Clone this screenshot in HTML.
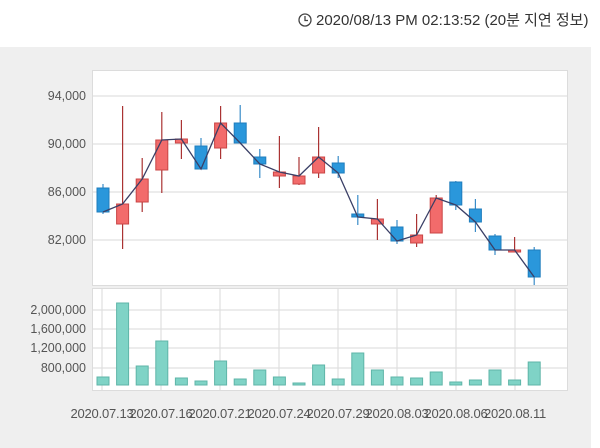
<!DOCTYPE html>
<html><head><meta charset="utf-8"><style>
body{margin:0;width:600px;height:448px;background:#fff;overflow:hidden;font-family:"Liberation Sans","Noto Sans CJK KR",sans-serif}
</style></head><body>
<svg id="s" width="600" height="448" xmlns="http://www.w3.org/2000/svg" style="position:absolute;left:0;top:0">
<rect x="0" y="47" width="591" height="401" fill="#efefef"/>
<rect x="92.5" y="70.5" width="475" height="215" fill="#fff" stroke="#dcdcdc"/>
<rect x="92.5" y="288.5" width="475" height="102" fill="#fff" stroke="#dcdcdc"/>
<g stroke="#e0e0e0" stroke-width="1.2">
<line x1="93" x2="567" y1="96" y2="96"/><line x1="93" x2="567" y1="144" y2="144"/>
<line x1="93" x2="567" y1="192" y2="192"/><line x1="93" x2="567" y1="240" y2="240"/>
<line x1="93" x2="567" y1="310" y2="310"/><line x1="93" x2="567" y1="329" y2="329"/>
<line x1="93" x2="567" y1="348" y2="348"/><line x1="93" x2="567" y1="368" y2="368"/>
</g>
<g id="vl" stroke="#e0e0e0" stroke-width="1.2"></g>
<g id="c"></g>
<g font-size="12.5" fill="#555" text-anchor="end">
<text x="86" y="100">94,000</text><text x="86" y="148">90,000</text>
<text x="86" y="196">86,000</text><text x="86" y="244">82,000</text>
<text x="86" y="314">2,000,000</text><text x="86" y="333">1,600,000</text>
<text x="86" y="352">1,200,000</text><text x="86" y="372">800,000</text>
</g>
<g font-size="13" fill="#555" text-anchor="middle" letter-spacing="-0.2">
<text x="102" y="418">2020.07.13</text><text x="161" y="418">2020.07.16</text>
<text x="220" y="418">2020.07.21</text><text x="279" y="418">2020.07.24</text>
<text x="338" y="418">2020.07.29</text><text x="397" y="418">2020.08.03</text>
<text x="456" y="418">2020.08.06</text><text x="515" y="418">2020.08.11</text>
</g>
<circle cx="305" cy="20" r="6" fill="none" stroke="#444" stroke-width="1.3"/>
<path d="M305 16v4.5h3" fill="none" stroke="#444" stroke-width="1.3"/>
<text x="316" y="25" font-size="15" fill="#333">2020/08/13 PM 02:13:52 (20분 지연 정보)</text>
</svg>
<script>
var d=[[188,212,184,214,0],[204,224,106,249,1],[179,202,158,212,1],[140,170,112,193,1],[139,143,120,159,1],[146,169,138,169,0],[123,148,106,159,1],[123,143,105,143,0],[157,164,149,178,0],[172,176,136,188,1],[176,184,157,185,1],[157,173,127,178,1],[163,173,156,178,0],[214,217,195,225,0],[219,224,199,240,1],[227,241,220,244,0],[235,243,214,247,1],[198,233,195,233,1],[182,205,181,210,0],[209,222,199,232,0],[236,250,234,255,0],[250,251,237,251,1],[250,277,247,285,0]];
var v=[377,303,366,341,378,381,361,379,370,377,383,365,379,353,370,377,378,372,382,380,370,380,362];
var h='',pts=[];
for(var i=0;i<23;i++){var x=103+i*19.6,c=d[i],up=c[4];
var col=up?'#f26b6b':'#2a97db',sk=up?'#c94444':'#1f7dbd',wk=up?'#a33':'#3a8cc8';
h+='<line x1="'+x+'" x2="'+x+'" y1="'+c[2]+'" y2="'+c[3]+'" stroke="'+wk+'" stroke-width="1.2"/>';
h+='<rect x="'+(x-6)+'" y="'+c[0]+'" width="12" height="'+Math.max(c[1]-c[0],2)+'" fill="'+col+'" stroke="'+sk+'" stroke-width="1"/>';
pts.push(x+','+(up?c[0]:c[1]));
h+='<rect x="'+(x-6)+'" y="'+v[i]+'" width="12" height="'+(385-v[i])+'" fill="#7fd3c6" stroke="#5fb5a8" stroke-width="1"/>';}
h+='<polyline points="'+pts.join(' ')+'" fill="none" stroke="#3a3f66" stroke-width="1.3"/>';
document.getElementById('c').innerHTML=h;
var g='';[102,161,220,279,338,397,456,515].forEach(function(x){g+='<line x1="'+x+'" x2="'+x+'" y1="289" y2="390"/>';});
document.getElementById('vl').innerHTML=g;
</script>
</body></html>
